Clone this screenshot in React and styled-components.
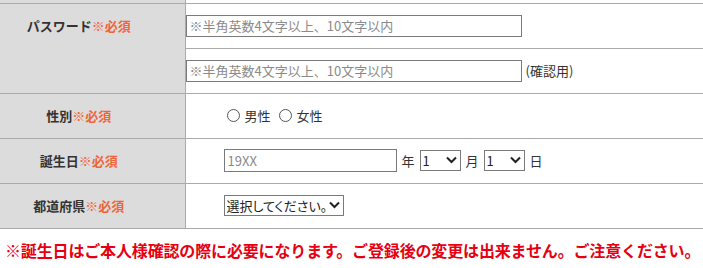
import React from 'react'
import styled, { createGlobalStyle } from 'styled-components'

const GlobalStyle = createGlobalStyle`
   body{
      margin:0;
      background:#fff;
      font-family:"Noto Sans CJK JP","Noto Sans",sans-serif;
      color:#333;
   }
`

const Table = styled.table`
   width:100%;
   border-collapse:collapse;
   font-size:13px;
`

const Th = styled.th`
   width:185px;
   box-sizing:border-box;
   background:#dcdcdc;
   border-right:1px solid #aaa;
   border-bottom:1px solid #aaa;
   font-weight:bold;
   color:#333;
   text-align:center;
   padding:0 27px 0 0;
   vertical-align:${({$top})=> $top ? 'top' : 'middle'};
   padding-top:${({$top})=> $top ? '12px' : '0'};
   height:${({$h})=> $h || 44}px;
`

const Required = styled.span`
   color:#f0643a;
`

const Td = styled.td`
   border-bottom:1px solid #aaa;
   height:${({$h})=> $h || 44}px;
   padding:0 0 0 ${({$indent})=> $indent ? 38 : 0}px;
   vertical-align:middle;
`

const Field = styled.div`
   display:flex;
   align-items:center;
   gap:${({$gap})=> $gap || 4}px;
`

const TextInput = styled.input`
   box-sizing:border-box;
   width:${({$w})=> $w}px;
   height:${({$tall})=> $tall ? 23 : 22}px;
   margin:0;
   padding:0 3px;
   border:1px solid #7a7a7a;
   border-radius:0;
   font-family:inherit;
   font-size:13px;
   color:#333;
   &::placeholder{
      color:#8a8a8a;
   }
`

const Note = styled.span`
   color:#333;
   font-size:13px;
`

const RadioLabel = styled.label`
   display:inline-flex;
   align-items:center;
   gap:5px;
   margin-left:3px;
   margin-right:3px;
   font-size:13px;
   color:#333;
`

const Radio = styled.input`
   appearance:none;
   margin:0;
   width:13px;
   height:13px;
   border:1px solid #555;
   border-radius:50%;
   box-sizing:border-box;
   background:#fff;
`

const SelectWrap = styled.span`
   position:relative;
   display:inline-flex;
`

const Select = styled.select`
   appearance:none;
   box-sizing:border-box;
   width:${({$w})=> $w}px;
   height:21px;
   margin:0;
   padding:0 0 0 2px;
   border:1px solid #7a7a7a;
   border-radius:0;
   background:#fff;
   font-family:inherit;
   font-size:13px;
   font-feature-settings:"palt";
   color:#222;
`

const Chevron = styled.svg`
   position:absolute;
   right:4px;
   top:6px;
   pointer-events:none;
`

const Warning = styled.p`
   margin:9px 0 0 5px;
   font-size:16px;
   font-weight:bold;
   color:#e60012;
   letter-spacing:-0.15px;
   white-space:nowrap;
`

const DropDown = ({width, children}) => (
   <SelectWrap>
      <Select $w={width}>{children}</Select>
      <Chevron width="11" height="8" viewBox="0 0 11 8">
         <path d="M1 1.5 L5.5 6 L10 1.5" fill="none" stroke="#222" strokeWidth="2"/>
      </Chevron>
   </SelectWrap>
)

const Label = ({children}) => (
   <>{children}<Required>※必須</Required></>
)

export default function App(){
   const hint = '※半角英数4文字以上、10文字以内'
   return (
      <>
         <GlobalStyle/>
         <Table>
            <tbody>
               <tr>
                  <Th $h={3}></Th>
                  <Td $h={2}></Td>
               </tr>
               <tr>
                  <Th rowSpan={2} $top><Label>パスワード</Label></Th>
                  <Td>
                     <Field>
                        <TextInput type="password" $w={336} placeholder={hint}/>
                     </Field>
                  </Td>
               </tr>
               <tr>
                  <Td>
                     <Field>
                        <TextInput type="password" $w={336} placeholder={hint}/>
                        <Note>(確認用)</Note>
                     </Field>
                  </Td>
               </tr>
               <tr>
                  <Th><Label>性別</Label></Th>
                  <Td $indent>
                     <Field $gap={2}>
                        <RadioLabel><Radio type="radio" name="sex"/>男性</RadioLabel>
                        <RadioLabel><Radio type="radio" name="sex"/>女性</RadioLabel>
                     </Field>
                  </Td>
               </tr>
               <tr>
                  <Th><Label>誕生日</Label></Th>
                  <Td $indent>
                     <Field $gap={5}>
                        <TextInput type="text" $w={173} $tall placeholder="19XX"/>
                        <Note>年</Note>
                        <DropDown width={41}><option>1</option></DropDown>
                        <Note>月</Note>
                        <DropDown width={41}><option>1</option></DropDown>
                        <Note>日</Note>
                     </Field>
                  </Td>
               </tr>
               <tr>
                  <Th><Label>都道府県</Label></Th>
                  <Td $indent>
                     <Field>
                        <DropDown width={120}><option>選択してください。</option></DropDown>
                     </Field>
                  </Td>
               </tr>
            </tbody>
         </Table>
         <Warning>※誕生日はご本人様確認の際に必要になります。ご登録後の変更は出来ません。ご注意ください。</Warning>
      </>
   )
}
